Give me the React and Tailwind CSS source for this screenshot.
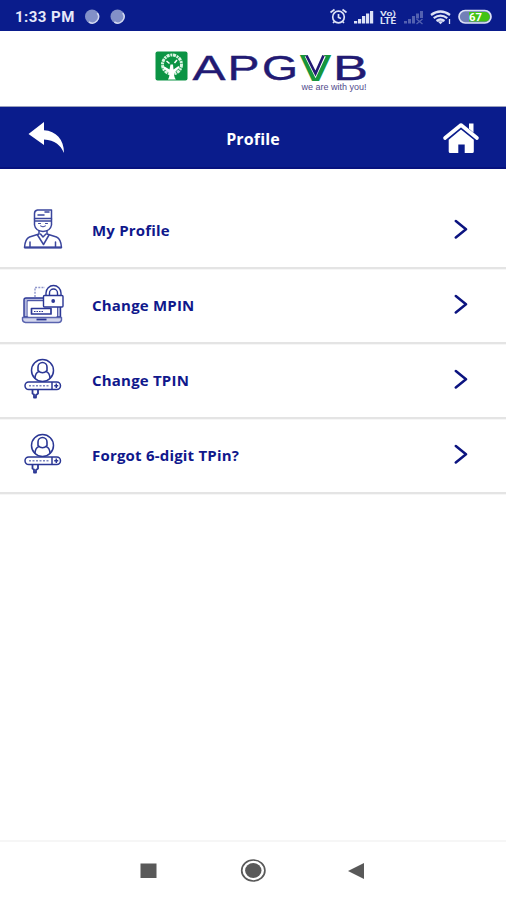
import React from 'react';

function StatusBar() {
  return (
    <div className="flex h-[31px] shrink-0 items-center bg-[#0a1c8c] pl-[15px] pr-[13px] pt-[2px] text-white">
      <span className="w-[60px] whitespace-nowrap pt-[2px] font-['Roboto',sans-serif] text-[15px] font-bold leading-none tracking-[0.45px] text-[#e6e9fa]">1:33 PM</span>
      <svg className="ml-[9px]" width="42" height="16" viewBox="0 0 42 16">
        <circle cx="8" cy="7.500" r="7" fill="#8290c8" />
        <path d="M13.300 4a6.300 6.300 0 0 1-8.500 9" fill="none" stroke="#d2d8f0" strokeWidth="1.500" />
        <circle cx="33.500" cy="7.500" r="7" fill="#8290c8" />
        <path d="M38.800 4a6.300 6.300 0 0 1-8.500 9" fill="none" stroke="#d2d8f0" strokeWidth="1.500" />
      </svg>
      <svg className="ml-auto" width="164" height="20" viewBox="0 0 164 20">
        <g fill="none" stroke="#dde2f6" strokeWidth="1.700">
          <circle cx="9.500" cy="10" r="5.800" />
          <path d="M9.500 7v3.500l2.500 1M1.500 5.500l4-3M17.500 5.500l-4-3M5.500 14.500l-1.500 1.500M13.500 14.500l1.500 1.500" />
        </g>
        <g fill="#dde2f6">
          <rect x="25" y="14" width="3.200" height="2.500" />
          <rect x="29" y="12" width="3.200" height="4.500" />
          <rect x="33" y="9" width="3.200" height="7.500" />
          <rect x="37" y="6.500" width="3.200" height="10" />
          <rect x="41" y="4" width="3.200" height="12.500" />
        </g>
        <g fill="#dde2f6" fontFamily="Roboto, sans-serif" fontWeight="700">
          <text x="51" y="8.800" fontSize="7.500" textLength="16" lengthAdjust="spacingAndGlyphs">Vo)</text>
          <text x="51" y="17" fontSize="9.500" textLength="16" lengthAdjust="spacingAndGlyphs">LTE</text>
        </g>
        <g fill="#5361b0">
          <rect x="75" y="14" width="3" height="2.500" />
          <rect x="79" y="12" width="3" height="4.500" />
          <rect x="83" y="9" width="3" height="7.500" />
          <rect x="87" y="6.500" width="3" height="5" />
          <rect x="91" y="4" width="3" height="7" />
        </g>
        <path d="M87.500 12l6 5M93.500 12l-6 5" stroke="#5361b0" strokeWidth="1.300" />
        <g fill="none" stroke="#dde2f6" strokeWidth="2.200">
          <path d="M102 8q9.500-7 19 0M104.700 11.200q6.800-5 13.600 0" />
          <path d="M107.500 14q4-3 8 0" />
        </g>
        <path d="M108.500 14.300h6l-3 3z" fill="#dde2f6" />
        <path d="M120.500 12v5" stroke="#dde2f6" strokeWidth="1.300" />
        <rect x="130" y="3.500" width="32" height="12.500" rx="6.200" fill="#7280b8" stroke="#dde2f6" strokeWidth="1.700" />
        <path d="M140 5h16a4.800 4.800 0 0 1 0 9.600h-16z" fill="#42c313" />
        <text x="146.500" y="13.500" textAnchor="middle" fill="#fff" fontFamily="Roboto, sans-serif" fontWeight="700" fontSize="10.500" textLength="13" lengthAdjust="spacingAndGlyphs">67</text>
      </svg>
    </div>
  );
}

function Logo() {
  return (
    <svg width="216" height="46" viewBox="153 48 216 46">
      <rect x="155.500" y="51.500" width="32" height="29" rx="2" fill="#0b9444" />
      <circle cx="172" cy="64.500" r="9.500" fill="none" stroke="#d9f5e2" strokeWidth="3" strokeDasharray="3 .8 2 .7" />
      <path d="M168 79.500c1.800-3 1.800-5.500.3-7.500L163 68l1.500-1.500 5 3 1-5h2.500l.5 5 5-3.500 1.200 1.500-4.700 4.500c-1.500 2-1 5 .8 7.500z" fill="#fff" />
      <path d="M166.500 61l3 2.500M177 60l-2.500 3" stroke="#fff" strokeWidth="1.500" />
      <g fill="#221a73" stroke="#221a73" strokeWidth=".4" fontFamily="'Liberation Sans', Arial, sans-serif" fontSize="35">
        <text x="192.500" y="80" textLength="33" lengthAdjust="spacingAndGlyphs">A</text>
        <text x="227.500" y="80" textLength="32" lengthAdjust="spacingAndGlyphs">P</text>
        <text x="262" y="80" textLength="36" lengthAdjust="spacingAndGlyphs">G</text>
        <text x="333" y="80" textLength="35" lengthAdjust="spacingAndGlyphs">B</text>
      </g>
      <text x="299.500" y="80.500" fill="#16963c" fontFamily="'Liberation Sans', Arial, sans-serif" fontWeight="700" fontSize="36" textLength="32" lengthAdjust="spacingAndGlyphs">V</text>
      <path d="M307 55.500l8.500 17 8-17" fill="none" stroke="#fff" strokeWidth="5" />
      <path d="M306.500 55.500l9 18 8-18" fill="none" stroke="#221a73" strokeWidth="2.600" />
      <text x="301.500" y="90" fill="#514a8c" fontFamily="'Liberation Sans', Arial, sans-serif" fontSize="8.500" textLength="65" lengthAdjust="spacingAndGlyphs">we are with you!</text>
    </svg>
  );
}

function BackArrow() {
  return (
    <svg width="38" height="34" viewBox="28 121 38 34">
      <path d="M28.500 134L44 122v8.300c12 .7 20 9 20 22.700-3.500-8-9-12.800-20-13.500v5.500z" fill="#fff" />
    </svg>
  );
}

function HomeIcon() {
  return (
    <svg width="38" height="34" viewBox="442 121 38 34">
      <path d="M445 138L461 125l16 13" fill="none" stroke="#fff" strokeWidth="3.600" strokeLinecap="round" strokeLinejoin="round" />
      <path d="M469 123.500h4.500v9l-4.500-3.700z" fill="#fff" />
      <path d="M461 129.500l12.800 10.300v11.700q0 1.500-1.500 1.500h-7.600v-8.500h-6.400v8.500h-8.100q-1.500 0-1.500-1.500v-11.700z" fill="#fff" />
    </svg>
  );
}

function PersonIcon() {
  return (
    <svg width="42" height="42" viewBox="0 0 42 42" fill="none" stroke="#3a459d" strokeWidth="1.500" strokeLinejoin="round" strokeLinecap="round">
      <path d="M13.500 11V5.500q0-3 3-3.500h14v9M14 10.500h16M24 4h4M17 7h6" />
      <path d="M13.500 11v6q1 6 8.500 6.500 7.500-.5 8.500-6.500v-6M14 13h16" />
      <path d="M17.500 15.500h2M24.500 15.500h2M19.500 18q2.500 2 5 0" strokeWidth="1" />
      <path d="M18 23v3l-9.500 3q-4.500 2-5 10.500h37q-.5-8.500-5-10.500L26 26v-3" />
      <path d="M16.500 27l6 9.500 5.500-9.500M19.500 26l2.500 3 3-3M9 34v5M34.500 34v5" />
      <path d="M4 39.500h36" strokeWidth="1.800" />
    </svg>
  );
}

function LaptopLockIcon() {
  return (
    <svg width="44" height="42" viewBox="0 0 44 42" fill="none" stroke="#2b3795" strokeWidth="1.400" strokeLinejoin="round">
      <path d="M14 14V4.500h10" strokeDasharray="2 1.200" stroke="#8f96cc" />
      <path d="M22 15H5q-2 0-2 2v17h3.500V18H22M36 24v10h3.500v-10" fill="#b4b9de" />
      <path d="M6.500 18.200H22V24h14v9.500H6.500z" fill="#fff" stroke="none" />
      <path d="M1.500 34.500h39v2.500q-.5 2.500-3 2.500h-33q-3-.5-3-3z" fill="#d3d6ed" stroke="#5a64af" />
      <path d="M15.500 36.500h10" strokeWidth="1.800" />
      <path d="M10.500 25.500h19.500v5.500H10.500z" strokeWidth="1.700" />
      <path d="M13 28.500h9" strokeDasharray="1.500 1" strokeWidth="1" />
      <path d="M25 12V10a7.500 7.500 0 0 1 15 0v2M28.500 12v-2a4 4 0 0 1 8 0v2" />
      <rect x="22.500" y="12.500" width="19.500" height="11.500" rx="1" fill="#fff" />
      <circle cx="32.200" cy="18" r="1.900" fill="#2b3795" stroke="none" />
    </svg>
  );
}

function PinIcon() {
  return (
    <svg width="42" height="42" viewBox="0 0 42 42" fill="none" stroke="#2b3795" strokeWidth="1.500" strokeLinejoin="round">
      <circle cx="21.500" cy="12.500" r="11" />
      <path d="M17 12.500V9a4.500 4.500 0 0 1 9 0v3.500q-4.500 4.500-9 0z" strokeWidth="1.600" />
      <path d="M14 20.500q.3-6 4-7M29 20.500q-.3-6-4-7" />
      <rect x="4" y="24" width="35.500" height="7.500" rx="3.700" fill="#fff" />
      <path d="M31 24v7.500" />
      <path d="M8 27.700h20" strokeDasharray="2 1.500" strokeWidth="1.500" stroke="#7d85c0" />
      <path d="M35.300 25.500v4.500M33.200 27.700h4" />
      <path d="M11.500 31.500v4l1.500 1v3h2v-2.500l2-1.500v-4" strokeWidth="1.800" />
    </svg>
  );
}

function Chevron() {
  return (
    <svg width="14" height="20" viewBox="0 0 14 20" fill="none" stroke="#0c1480" strokeWidth="2.500" strokeLinecap="round" strokeLinejoin="round">
      <path d="M1.800 2L12 10.300 1.800 18.500" />
    </svg>
  );
}

const items = [
  { label: 'My Profile', Icon: PersonIcon },
  { label: 'Change MPIN', Icon: LaptopLockIcon },
  { label: 'Change TPIN', Icon: PinIcon },
  { label: 'Forgot 6-digit TPin?', Icon: PinIcon },
];

export default function App() {
  return (
    <div className="flex h-[900px] w-[506px] flex-col overflow-hidden bg-white font-['Open_Sans',sans-serif]">
      <StatusBar />
      <header className="flex h-[76px] shrink-0 items-start justify-center border-b border-[#9aa0bd] pl-4 pt-[17px]">
        <Logo />
      </header>
      <div className="flex h-[62px] shrink-0 items-center justify-between border-b-2 border-[#07127e] bg-[#0a1c8c] px-7 pt-0.5">
        <BackArrow />
        <h1 className="pr-0.5 pt-px text-[16px] font-bold leading-none tracking-[0.15px] text-white">Profile</h1>
        <div className="-mr-0.5"><HomeIcon /></div>
      </div>
      <main className="flex-1 pt-[25px]">
        {items.map(({ label, Icon }) => (
          <div key={label} className="flex h-[75px] items-center border-b-2 border-[#e4e4e4] pl-[21px] pr-[38px] shadow-[0_1px_0_#f6f6f6]">
            <div className="flex w-[71px] shrink-0 pb-1"><Icon /></div>
            <span className="whitespace-nowrap text-[15px] font-bold leading-none tracking-[0.2px] text-[#10188c]">{label}</span>
            <div className="ml-auto pb-1"><Chevron /></div>
          </div>
        ))}
      </main>
      <nav className="flex h-[60px] shrink-0 items-center justify-center border-t-2 border-[#f6f6f6]">
        <svg width="226" height="28" viewBox="0 0 226 28">
          <rect x="0.500" y="6.500" width="16" height="14.500" fill="#595959" />
          <ellipse cx="113.300" cy="13.500" rx="11.600" ry="10.500" fill="none" stroke="#595959" strokeWidth="1.700" />
          <ellipse cx="113.300" cy="13.500" rx="8.200" ry="7.500" fill="#595959" />
          <path d="M208 14l16-8v16z" fill="#595959" />
        </svg>
      </nav>
    </div>
  );
}
